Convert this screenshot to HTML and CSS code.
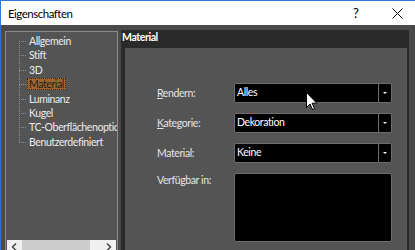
FILE: index.html
```html
<!DOCTYPE html>
<html lang="de">
<head>
  <meta charset="UTF-8" />
  <title>Eigenschaften</title>
  <link rel="stylesheet" href="styles.css">
</head>
<body>

<div class="window">
  <div class="titlebar">
    <span class="title">Eigenschaften</span>
    <span class="help">?</span>
    <span class="close">
      <svg width="11" height="11" viewBox="0 0 11 11"><path d="M0.5 0.5 L10.5 10.5 M10.5 0.5 L0.5 10.5" stroke="#000" stroke-width="1" fill="none"/></svg>
    </span>
  </div>

  <div class="dialog">
    <div class="tree">
      <ul class="tree-list">
        <li><span>Allgemein</span></li>
        <li><span>Stift</span></li>
        <li><span>3D</span></li>
        <li class="selected"><span>Material</span></li>
        <li><span>Luminanz</span></li>
        <li><span>Kugel</span></li>
        <li><span>TC-Oberflächenoptionen</span></li>
        <li><span>Benutzerdefiniert</span></li>
      </ul>
      <div class="hscroll">
        <span class="scroll-btn">
          <svg width="7" height="8" viewBox="0 0 7 8"><path d="M5 0.5 L1.5 4 L5 7.5" stroke="#404040" stroke-width="1.4" fill="none"/></svg>
        </span>
        <span class="scroll-thumb"></span>
        <span class="scroll-track"></span>
        <span class="scroll-btn">
          <svg width="7" height="8" viewBox="0 0 7 8"><path d="M2 0.5 L5.5 4 L2 7.5" stroke="#404040" stroke-width="1.4" fill="none"/></svg>
        </span>
      </div>
    </div>

    <div class="page">
      <div class="page-title">Material</div>
      <div class="page-body">
        <div class="form">
          <label><u>R</u>endern:</label>
          <div class="combo"><span class="field">Alles</span><span class="drop"><i></i></span></div>

          <label><u>K</u>ategorie:</label>
          <div class="combo"><span class="field">Dekoration</span><span class="drop"><i></i></span></div>

          <label>Material:</label>
          <div class="combo"><span class="field">Keine</span><span class="drop"><i></i></span></div>

          <label class="top">Verfügbar in:</label>
          <div class="listbox"></div>
        </div>
      </div>
    </div>
  </div>

  <svg class="cursor" width="12" height="19" viewBox="0 0 12 19">
    <path d="M0.5 0.5 L0.5 15.5 L4 12 L6.5 17.5 L8.5 16.6 L6.1 11.2 L10.8 11.2 Z" fill="#fff" stroke="#000" stroke-width="1"/>
  </svg>
</div>

</body>
</html>
```

FILE: styles.css
```css
body {
  margin: 0;
  font-family: Lato, 'Open Sans', sans-serif;
  font-size: 10.5px;
  letter-spacing: -0.4px;
  overflow: hidden;
}

.window {
  position: relative;
  width: 414px;
  height: 249px;
  border-top: 1px solid #2b79d0;
  border-left: 1px solid #2b79d0;
  overflow: hidden;
}

/* title bar */
.titlebar {
  height: 24px;
  background: #fff;
  display: flex;
  align-items: center;
  padding-left: 7px;
  color: #000;
  font-size: 11.5px;
  letter-spacing: -0.5px;
}

.title {
  flex: 1;
}

.help {
  width: 10px;
  margin-right: 29px;
  font-size: 13px;
}

.close {
  width: 11px;
  height: 11px;
  margin-right: 12px;
  display: flex;
}

/* dialog body */
.dialog {
  background: #4a4a4a;
  height: 240px;
  display: flex;
  align-items: flex-start;
  padding: 6px 0 0 4px;
}

.tree {
  width: 111px;
  border: 1px solid #8c8c8c;
  background: #545454;
  display: flex;
  flex-direction: column;
  flex: none;
}

.tree-list {
  list-style: none;
  margin: 0;
  padding: 2px 0 0 0;
  height: 206px;
  position: relative;
  color: #ececec;
  white-space: nowrap;
  overflow: hidden;
}

.tree-list::before {
  content: "";
  position: absolute;
  left: 13px;
  top: 9px;
  height: 101px;
  border-left: 1px dotted #8e8e8e;
}

.tree-list li {
  height: 14.4px;
  line-height: 14px;
  padding-left: 21px;
  position: relative;
}

.tree-list li::before {
  content: "";
  position: absolute;
  left: 13px;
  width: 7px;
  top: 7px;
  border-top: 1px dotted #8e8e8e;
}

.tree-list span {
  padding: 0 2px;
}

.tree-list .selected span {
  background: #a0652d;
  color: #1c1c1c;
  outline: 1px dotted #3a2a1a;
  outline-offset: -1px;
}

.hscroll {
  height: 17px;
  margin: 0 1px;
  background: #f0f0f0;
  display: flex;
}

.scroll-btn {
  width: 15px;
  display: flex;
  justify-content: center;
  padding-top: 3px;
}

.scroll-thumb {
  width: 68px;
  background: #cdcdcd;
}

.scroll-track {
  flex: 1;
}

/* property page */
.page {
  margin: -1px 0 0 3px;
  width: 288px;
  height: 230px;
  background: #2a2a2a;
  display: flex;
  flex-direction: column;
}

.page-title {
  height: 18px;
  line-height: 14px;
  padding-left: 1px;
  color: #fff;
  font-weight: bold;
}

.page-body {
  flex: 1;
  margin: 0 2px 0 4px;
  background: #545454;
}

.form {
  display: grid;
  grid-template-columns: 77px 1fr;
  row-gap: 10px;
  align-items: center;
  padding: 35px 15px 0 32px;
  color: #e4e4e4;
}

.form .top {
  align-self: start;
  padding-top: 1px;
}

.combo {
  height: 20px;
  display: flex;
}

.combo .field {
  flex: 1;
  background: #000;
  color: #fff;
  border: 1px solid #6c6c6c;
  border-radius: 2px;
  padding-left: 2px;
  line-height: 17px;
}

.combo .drop {
  width: 12px;
  margin-left: -2px;
  background: #000;
  border: 1px solid #6c6c6c;
  border-radius: 2px;
  display: flex;
  align-items: center;
  justify-content: center;
}

.combo .drop i {
  border-left: 2px solid transparent;
  border-right: 2px solid transparent;
  border-top: 2px solid #fff;
}

.listbox {
  height: 67px;
  background: #000;
  border: 1px solid #6c6c6c;
  border-radius: 2px;
}

.cursor {
  position: absolute;
  left: 305px;
  top: 91px;
}
```
